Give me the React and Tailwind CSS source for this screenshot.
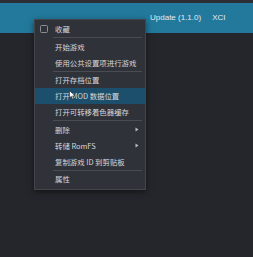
import React from "react";

const cjk = { fontFamily: '"Noto Sans CJK SC", "Noto Sans", sans-serif' };

function Row({ children, arrow, active, check }) {
  return (
    <div
      className={`flex h-4 items-center text-[7.4px] leading-none text-[#d6d8db] ${active ? "bg-[#1c4f6b]" : ""}`}
    >
      <div className="flex w-[20px] shrink-0 items-center pl-[5px]">
        {check && <div className="h-[8px] w-[8px] rounded-[1.5px] border border-[#8b8d92]" />}
      </div>
      <div className="flex-1 whitespace-nowrap">{children}</div>
      {arrow && (
        <svg width="4" height="5" viewBox="0 0 4 5" className="mr-[6px]">
          <path d="M0.5 0.5 L3.5 2.5 L0.5 4.5 Z" fill="#b8babe" />
        </svg>
      )}
    </div>
  );
}

function Sep() {
  return <div className="my-[0.25px] ml-[18px] mr-[3px] h-px bg-[#4a4c53]" />;
}

export default function App() {
  return (
    <div className="relative h-[257px] w-[253px] overflow-hidden bg-[#25262b]">
      <div className="h-[3px] bg-[#2c2f35]" />
      <div
        className="flex h-[30px] items-center gap-[11px] bg-[#22799c] pl-[150px] text-[8px] text-[#e3ebf0]"
        style={{ fontFamily: '"Liberation Sans", Arial, sans-serif' }}
      >
        <span>Update (1.1.0)</span>
        <span>XCI</span>
      </div>

      <div
        className="absolute left-[34px] top-[19px] w-[112px] border border-[#43454c] bg-[#30323a] pt-px pb-[2px] shadow-[0_2px_6px_rgba(0,0,0,0.5)]"
        style={cjk}
      >
        <Row check>收藏</Row>
        <Sep />
        <Row>开始游戏</Row>
        <Row>使用公共设置项进行游戏</Row>
        <Sep />
        <Row>打开存档位置</Row>
        <Row active>打开 MOD 数据位置</Row>
        <Row>打开可转移着色器缓存</Row>
        <Sep />
        <Row arrow>删除</Row>
        <Row arrow>转储 RomFS</Row>
        <Row>复制游戏 ID 到剪贴板</Row>
        <Sep />
        <Row>属性</Row>
      </div>

      <svg
        width="7"
        height="10"
        viewBox="0 0 7 10"
        className="absolute left-[69px] top-[90px]"
      >
        <path d="M0.5 0.5 L0.5 8 L2.3 6.3 L3.6 9.2 L4.8 8.7 L3.6 5.9 L6 5.9 Z" fill="#ffffff" stroke="#222" strokeWidth="0.6" />
      </svg>
    </div>
  );
}
